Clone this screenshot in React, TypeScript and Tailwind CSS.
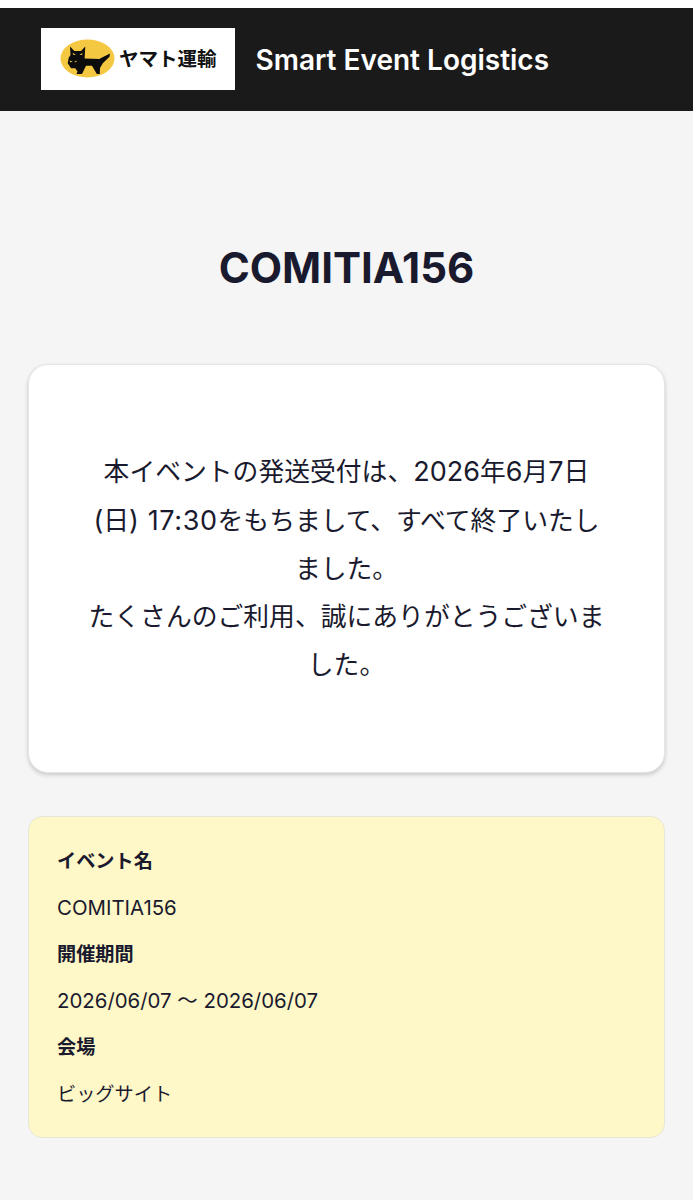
import React from 'react';

const sans = "font-['Inter','Noto_Sans_CJK_JP',sans-serif]";

const CatMark: React.FC = () => (
  <svg width="56" height="40" viewBox="0 0 56 40" className="shrink-0">
    <ellipse cx="27.5" cy="19.5" rx="27" ry="19" fill="#f5c842" />
    <path
      fill="#0c0c0c"
      d="M10 7.5 L14.3 12 L21 12 L25.3 7.5 L24.6 19.5 L39.5 20 L41 19 L50 14.5 L49.5 17.7 L43 24 L40 29 L39.8 35 L36.8 35 L32 26.8 L26 26.8 L22 35 L16.5 35 L17.5 32.5 L15.3 29.3 L11 29.3 L7.7 24.3 L8.7 18.7 L10.5 16 Z"
    />
    <path fill="#f5c842" d="M12.6 14 L16 15.6 L13.4 16 Z M22.6 14 L19.4 15.8 L22 16 Z M9.6 21.4 L12.8 22.8 L10.2 23.2 Z M16.6 21.4 L14.2 22.9 L16.2 23.2 Z" />
  </svg>
);

const Info: React.FC<{ label: string; children: React.ReactNode }> = ({ label, children }) => (
  <>
    <dt className="font-bold h-[46.5px] flex items-center">{label}</dt>
    <dd className="h-[46.5px] flex items-center">{children}</dd>
  </>
);

export default function App() {
  return (
    <div className={`${sans} min-h-[1200px] bg-[#f5f5f6] text-[#1a1a2e]`}>
      <div className="h-2 bg-white" />
      <header className="h-[103px] bg-[#1a1a1a] flex items-center pl-[41px] gap-[20.5px]">
        <div className="w-[194px] h-[62px] mb-[2px] bg-white flex items-center pl-[19px] gap-[3px]">
          <CatMark />
          <span className="text-[19.5px] font-bold text-[#111] whitespace-nowrap mt-[2px]">ヤマト運輸</span>
        </div>
        <h1 className="text-[28px] font-semibold text-white whitespace-nowrap">Smart Event Logistics</h1>
      </header>

      <main className="px-[28px]">
        <h2 className="text-[42px] font-bold text-center leading-[50px] pt-[132px] pb-[71px]">COMITIA156</h2>

        <section className="h-[409px] bg-white rounded-[20px] border border-[#e5e5e8] shadow-[0_2px_4px_rgba(0,0,0,0.18)] flex items-center justify-center px-[56px] pt-[1px]">
          <p className="text-[25.8px] leading-[48.2px] text-center">
            本イベントの発送受付は、<span className="text-[27px]">2026</span>年<span className="text-[27px]">6</span>月<span className="text-[27px]">7</span>日
            <span className="text-[27px]">(</span>日<span className="text-[27px] tracking-[0.6px]">) 17:30</span>をもちまして、すべて終了いたしました。
            <br />
            たくさんのご利用、誠にありがとうございました。
          </p>
        </section>

        <section className="mt-[43px] h-[322px] bg-[#fef7c7] rounded-[14px] border border-[#e8e6d8] px-[28px] pt-[21.5px] text-[19.2px]">
          <dl>
            <Info label="イベント名"><span className="text-[20.4px]">COMITIA156</span></Info>
            <Info label="開催期間"><span className="text-[20.4px]">2026/06/07 〜 2026/06/07</span></Info>
            <Info label="会場">ビッグサイト</Info>
          </dl>
        </section>
      </main>
    </div>
  );
}
